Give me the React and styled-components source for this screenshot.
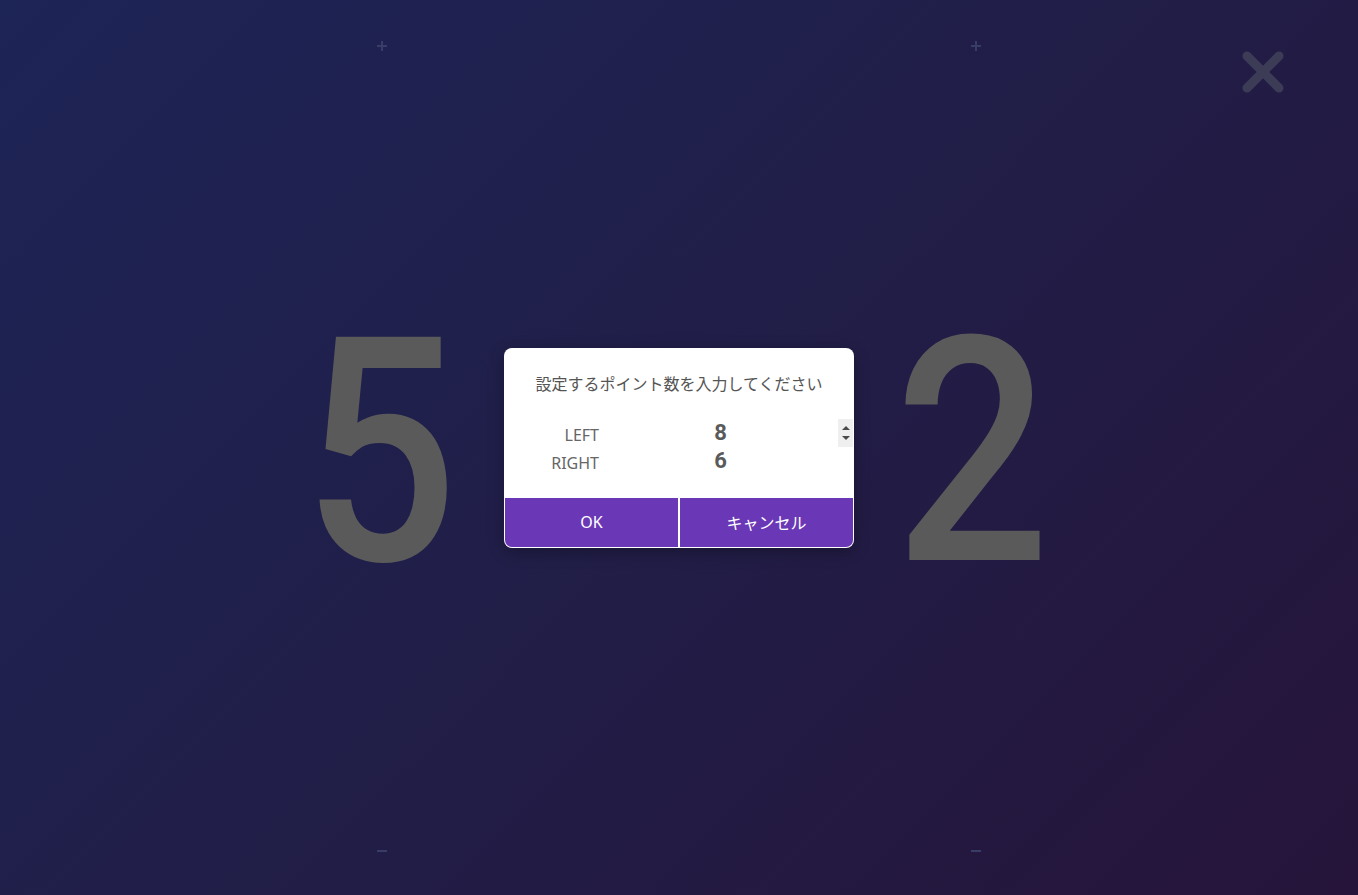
import React from 'react'
import styled, { createGlobalStyle } from 'styled-components'

const GlobalStyle = createGlobalStyle`
  html, body {
    margin: 0;
    padding: 0;
    height: 100%;
  }
  body {
    font-family: 'Noto Sans', 'Noto Sans CJK JP', sans-serif;
  }
`

const Screen = styled.div`
  position: relative;
  width: 100vw;
  height: 100vh;
  overflow: hidden;
  background: linear-gradient(135deg, #1d2456 0%, #211e48 50%, #26143a 100%);
`

const Board = styled.div`
  display: grid;
  grid-template-columns: 594px 594px;
  justify-content: center;
  height: 100%;
`

const Side = styled.div`
  display: flex;
  flex-direction: column;
  align-items: center;
  justify-content: space-between;
  padding: 41px 0 39px;
  box-sizing: border-box;
`

const Marker = styled.div`
  position: relative;
  width: 10px;
  height: 10px;
  &::before {
    content: '';
    position: absolute;
    left: 0;
    top: 4px;
    width: 10px;
    height: 2px;
    background: #3a3c68;
  }
  &::after {
    content: '';
    display: ${p => (p.$half ? 'none' : 'block')};
    position: absolute;
    left: 4px;
    top: 0;
    width: 2px;
    height: 10px;
    background: #3a3c68;
  }
`

const Score = styled.div`
  font-family: Roboto, 'Liberation Sans', sans-serif;
  font-weight: 500;
  font-size: 314px;
  line-height: 1;
  color: #5a5a5a;
  transform: scaleX(0.87);
  margin-top: 8px;
  margin-right: ${p => p.$shift || 0}px;
`

const CloseButton = styled.div`
  position: absolute;
  top: 48px;
  right: 71px;
  width: 48px;
  height: 48px;
`

const Overlay = styled.div`
  position: absolute;
  inset: 0;
  display: flex;
  align-items: center;
  justify-content: center;
`

const Dialog = styled.div`
  width: 350px;
  height: 200px;
  box-sizing: border-box;
  background: #fff;
  border-radius: 8px;
  box-shadow: 0 4px 16px rgba(0, 0, 0, 0.3);
  display: flex;
  flex-direction: column;
  padding: 1px;
`

const Title = styled.div`
  margin-top: 25px;
  text-align: center;
  font-size: 16px;
  line-height: 20px;
  color: #555;
`

const Fields = styled.div`
  margin-top: 25px;
  display: flex;
  flex-direction: column;
`

const Row = styled.div`
  display: flex;
  align-items: center;
  height: 28px;
`

const Label = styled.div`
  width: 94px;
  text-align: right;
  font-size: 16px;
  color: #666;
  padding-top: 5px;
`

const Value = styled.div`
  flex: 1;
  margin-left: 4px;
  text-align: center;
  font-family: Roboto, 'Liberation Sans', sans-serif;
  font-weight: 700;
  font-size: 22px;
  color: #5a5a5a;
`

const Spinner = styled.div`
  width: 15px;
  height: 28px;
  background: ${p => (p.$show ? '#efefef' : 'transparent')};
  display: flex;
  flex-direction: column;
  align-items: center;
  justify-content: center;
  gap: 6px;
`

const Arrow = styled.div`
  width: 0;
  height: 0;
  border-left: 4px solid transparent;
  border-right: 4px solid transparent;
  ${p =>
    p.$down
      ? 'border-top: 4px solid #4a4a4a;'
      : 'border-bottom: 4px solid #4a4a4a;'}
`

const Buttons = styled.div`
  margin-top: auto;
  display: flex;
  gap: 2px;
  height: 49px;
`

const Button = styled.button`
  flex: 1;
  border: none;
  margin: 0;
  background: #6a38b6;
  color: #fff;
  font-family: 'Noto Sans', 'Noto Sans CJK JP', sans-serif;
  font-size: 16px;
  border-radius: ${p => (p.$left ? '0 0 0 7px' : '0 0 7px 0')};
  cursor: pointer;
`

const fields = [
  { label: 'LEFT', value: 8, focused: true },
  { label: 'RIGHT', value: 6, focused: false },
]

const App = () => {
  return (
    <React.Fragment>
      <GlobalStyle />
      <Screen>
        <Board>
          <Side>
            <Marker />
            <Score $shift={4}>5</Score>
            <Marker $half />
          </Side>
          <Side>
            <Marker />
            <Score $shift={8}>2</Score>
            <Marker $half />
          </Side>
        </Board>

        <CloseButton>
          <svg width="48" height="48" viewBox="0 0 48 48">
            <path
              d="M8 8 L40 40 M40 8 L8 40"
              stroke="#3d3c56"
              strokeWidth="9"
              strokeLinecap="round"
            />
          </svg>
        </CloseButton>

        <Overlay>
          <Dialog>
            <Title>設定するポイント数を入力してください</Title>
            <Fields>
              {fields.map(f => (
                <Row key={f.label}>
                  <Label>{f.label}</Label>
                  <Value>{f.value}</Value>
                  <Spinner $show={f.focused}>
                    {f.focused && (
                      <React.Fragment>
                        <Arrow />
                        <Arrow $down />
                      </React.Fragment>
                    )}
                  </Spinner>
                </Row>
              ))}
            </Fields>
            <Buttons>
              <Button $left>OK</Button>
              <Button>キャンセル</Button>
            </Buttons>
          </Dialog>
        </Overlay>
      </Screen>
    </React.Fragment>
  )
}

export default App
